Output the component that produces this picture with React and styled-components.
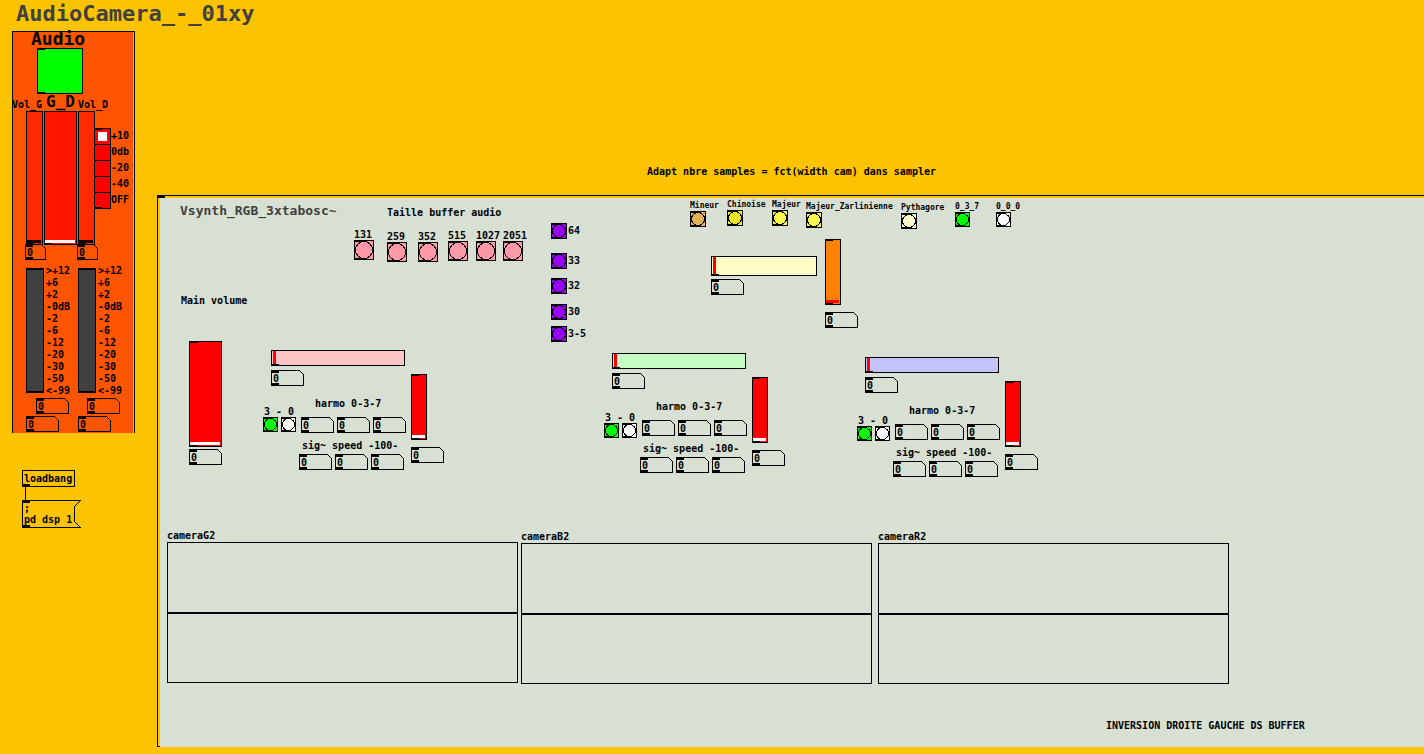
import React from "react";
import styled, { createGlobalStyle, css } from "styled-components";

const INK = "#000000";
const YELLOW = "#fcc400";
const GREY = "#d8e0d4";
const ORANGE = "#ff5500";
const SLATE = "#404040";

const GlobalStyle = createGlobalStyle`
  *, *::before, *::after { box-sizing: border-box; }
  body {
    margin: 0;
    background: ${YELLOW};
    color: ${INK};
    font: bold 10px/11px "DejaVu Sans Mono", monospace;
    white-space: nowrap;
  }
  button, input { font: inherit; color: inherit; margin: 0; padding: 0; border-radius: 0; }
`;

/* ---------- page ---------- */

const Page = styled.div`
  min-height: 100vh;
  overflow-x: hidden;
`;

const Header = styled.header`
  height: 31px;
  padding: 1px 16px 0;
`;

const Title = styled.h1`
  margin: 0;
  color: ${SLATE};
  font-size: 22px;
  line-height: 25px;
`;

const Body = styled.main`
  display: flex;
  align-items: flex-start;
`;

const Side = styled.aside`
  flex: 0 0 157px;
  padding-left: 12px;
`;

const Main = styled.section`
  flex: 1;
  min-width: 0;
`;

const Note = styled.p`
  display: flex;
  align-items: flex-end;
  height: 164px;
  margin: 0;
  padding: 0 0 18px 490px;
`;

/* ---------- shared parts ---------- */

const outlet = css`
  content: "";
  position: absolute;
  left: -1px;
  width: 8px;
  height: 2px;
  background: ${INK};
  pointer-events: none;
`;

const iolets = css`
  position: relative;
  &::before { ${outlet} top: -1px; }
  &::after { ${outlet} bottom: -1px; }
`;

const Row = styled.div`
  display: flex;
  align-items: flex-start;
  gap: ${(p) => p.$gap || 0}px;
  margin-top: ${(p) => p.$top || 0}px;
  padding-left: ${(p) => p.$indent || 0}px;
`;

const Column = styled.div`
  display: flex;
  flex: none;
  flex-direction: column;
  align-items: flex-start;
  gap: ${(p) => p.$gap || 0}px;
  padding-top: ${(p) => p.$top || 0}px;
`;

const BangButton = styled.button`
  flex: none;
  width: ${(p) => p.$size}px;
  height: ${(p) => p.$size}px;
  border: 1px solid ${INK};
  background: ${(p) => p.$color};
  ${iolets}
`;

const BangFace = styled.svg`
  display: block;
  width: 100%;
  height: 100%;
`;

function Bang({ size = 16, color, label }) {
  const d = size - 2;
  return (
    <BangButton type="button" aria-label={label} $size={size} $color={color}>
      <BangFace viewBox={`0 0 ${d} ${d}`} shapeRendering="crispEdges">
        <circle cx={d / 2} cy={d / 2} r={d / 2 - 0.5} fill="none" stroke={INK} strokeWidth="1" />
      </BangFace>
    </BangButton>
  );
}

const NumberFrame = styled.div`
  position: relative;
  flex: none;
  width: ${(p) => p.$w}px;
  height: 16px;
`;

const Outline = styled.svg`
  position: absolute;
  inset: 0;
  pointer-events: none;
`;

const NumberInput = styled.input`
  display: block;
  width: 100%;
  height: 16px;
  padding: 0 4px 0 2px;
  border: 0;
  background: transparent;
  outline: 0;
`;

function NumberBox({ w = 33, label }) {
  return (
    <NumberFrame $w={w}>
      <Outline width={w} height="16" shapeRendering="crispEdges">
        <path d={`M.5 .5H${w - 4.5}L${w - 0.5} 4.5V15.5H.5Z`} fill="none" stroke={INK} />
        <path d="M0 0H8V3H0ZM0 13H8V16H0Z" fill={INK} />
      </Outline>
      <NumberInput type="text" inputMode="numeric" defaultValue="0" aria-label={label} />
    </NumberFrame>
  );
}

const SliderFrame = styled.div`
  display: flex;
  flex: none;
  width: ${(p) => p.$w}px;
  height: ${(p) => p.$h}px;
  padding: ${(p) => (p.$vertical ? "0 1px 1px 0" : "0 1px")};
  border: 1px solid ${INK};
  background: ${(p) => p.$color};
  ${iolets}
  ${(p) => !p.$inlet && "&::before { display: none; }"}
`;

const Range = styled.input`
  appearance: none;
  display: block;
  width: 100%;
  height: 100%;
  min-width: 0;
  background: transparent;
  ${(p) => p.$vertical && "writing-mode: vertical-lr; direction: rtl;"}

  &::-webkit-slider-runnable-track {
    width: 100%;
    height: 100%;
  }
  &::-webkit-slider-thumb {
    appearance: none;
    width: ${(p) => (p.$vertical ? "100%" : "3px")};
    height: ${(p) => (p.$vertical ? "3px" : "100%")};
    background: ${(p) => p.$knob};
  }
`;

function Slider({ w, h, color, knob = "#ffffff", vertical, inlet = vertical, label }) {
  return (
    <SliderFrame $w={w} $h={h} $color={color} $vertical={vertical} $inlet={inlet}>
      <Range type="range" defaultValue="0" aria-label={label} $knob={knob} $vertical={vertical} />
    </SliderFrame>
  );
}

/* ---------- audio panel ---------- */

const AudioPanel = styled.section`
  width: 123px;
  padding-right: 1px;
  border: solid ${INK};
  border-width: 1px 1px 0 1px;
`;

const AudioBody = styled.div`
  display: flow-root;
  padding-bottom: 1px;
  background: ${ORANGE};
`;

const PowerName = styled.label`
  display: block;
  height: 20px;
  margin: -4px 0 0 18px;
  font-size: 18px;
  line-height: 22px;
`;

const Power = styled.input`
  appearance: none;
  display: block;
  width: 46px;
  height: 46px;
  margin-left: 24px;
  border: 1px solid ${INK};
  background: #00ff00;
  ${iolets}
`;

const FaderNames = styled.div`
  display: grid;
  grid-template-columns: 34px 32px auto;
  height: 17px;
  margin-left: -1px;
`;

const FaderName = styled.span`
  font-size: ${(p) => (p.$big ? 16 : 10)}px;
  line-height: ${(p) => (p.$big ? 15 : 21)}px;
`;

const GainList = styled.div`
  position: relative;
  height: 81px;
  margin: 17px 0 0 -2px;
  &::before { ${outlet} left: 0; top: 0; }
  &::after { ${outlet} left: 0; bottom: 0; }
`;

const GainOption = styled.label`
  display: flex;
  height: 16px;
  line-height: 15px;
`;

const GainRadio = styled.input`
  appearance: none;
  flex: none;
  width: 17px;
  height: 17px;
  border: 1px solid ${INK};
  background: #ff0000;
  &:checked { box-shadow: inset 0 0 0 3px #ff0000; background: #ffffff; }
`;

const Meters = styled.div`
  display: grid;
  grid-template-columns: 52px 52px;
  margin-top: 5px;
  padding-left: 13px;
`;

const MeterGroup = styled.div`
  display: flex;
  gap: 2px;
`;

const Meter = styled.div`
  width: 18px;
  height: 125px;
  margin-top: 3px;
  border: solid ${INK};
  border-width: 2px 1px;
  background: ${SLATE};
`;

const Scale = styled.ul`
  margin: 0;
  padding: 0;
  list-style: none;
  line-height: 12px;
`;

const LEVELS = [">+12", "+6", "+2", "-0dB", "-2", "-6", "-12", "-20", "-30", "-50", "<-99"];
const GAINS = ["+10", "0db", "-20", "-40", "OFF"];
const CHANNELS = ["G", "D"];

function Audio() {
  return (
    <AudioPanel>
      <AudioBody>
        <PowerName htmlFor="power">Audio</PowerName>
        <Power id="power" type="checkbox" />
        <FaderNames>
          <FaderName>Vol_G</FaderName>
          <FaderName $big>G_D</FaderName>
          <FaderName>Vol_D</FaderName>
        </FaderNames>
        <Row $indent={13} $gap={1}>
          <Slider w={17} h={134} color="#ff2a00" knob={INK} vertical inlet={false} label="Vol_G" />
          <Slider w={33} h={134} color="#ff1500" vertical inlet={false} label="G_D" />
          <Slider w={17} h={134} color="#ff2a00" knob={INK} vertical inlet={false} label="Vol_D" />
          <GainList role="radiogroup" aria-label="Gain">
            {GAINS.map((gain) => (
              <GainOption key={gain}>
                <GainRadio type="radio" name="gain" defaultChecked={gain === "+10"} />
                {gain}
              </GainOption>
            ))}
          </GainList>
        </Row>
        <Row $indent={12} $gap={31} $top={-1}>
          {CHANNELS.map((c) => <NumberBox key={c} w={21} label={`Vol_${c} value`} />)}
        </Row>
        <Meters>
          {CHANNELS.map((c) => (
            <MeterGroup key={c}>
              <Meter role="img" aria-label={`Level ${c}`} />
              <Scale>
                {LEVELS.map((level) => <li key={level}>{level}</li>)}
              </Scale>
            </MeterGroup>
          ))}
        </Meters>
        <Row $indent={23} $gap={18} $top={1}>
          {CHANNELS.map((c) => <NumberBox key={c} label={`Peak ${c}`} />)}
        </Row>
        <Row $indent={13} $gap={19} $top={2}>
          {CHANNELS.map((c) => <NumberBox key={c} label={`RMS ${c}`} />)}
        </Row>
      </AudioBody>
    </AudioPanel>
  );
}

/* ---------- start-up objects ---------- */

const Startup = styled.div`
  display: flex;
  flex-direction: column;
  align-items: flex-start;
  margin: 37px 0 0 10px;
`;

const ObjectBox = styled.div`
  position: relative;
  width: 53px;
  height: 17px;
  padding: 2px 1px;
  border: 1px solid ${INK};
  &::after { ${outlet} bottom: -1px; height: 3px; }
`;

const Cord = styled.div`
  width: 1px;
  height: 13px;
  margin-left: 3px;
  background: ${INK};
`;

const Message = styled.button`
  position: relative;
  width: 59px;
  height: 28px;
  padding: 0 0 0 2px;
  border: 0;
  background: transparent;
  line-height: 11px;
  text-align: left;
  white-space: pre;
`;

/* ---------- synth panel ---------- */

const SynthPanel = styled.section`
  position: relative;
  padding: 2px 0 0 2px;
  border: solid ${INK};
  border-width: 1px 0 0 1px;
  &::before { ${outlet} top: -1px; height: 3px; }
  &::after { ${outlet} bottom: 0; width: 3px; height: 1px; }
`;

const SynthBody = styled.div`
  display: flow-root;
  margin-bottom: -1px;
  padding-bottom: 16px;
  background: ${GREY};
`;

const Output = styled.section`
  flex: 0 0 92px;
  min-width: 0;
  padding: 5px 0 0 20px;
`;

const SynthTitle = styled.h2`
  margin: 0 0 77px;
  color: ${SLATE};
  font-size: 13px;
  line-height: 15px;
`;

const OutputLevel = styled.div`
  display: grid;
  gap: 2px;
  margin: 35px 0 0 9px;
`;

const OutputName = styled.div`
  padding-left: 1px;
`;

const Controls = styled.div`
  display: flex;
  align-items: flex-start;
  padding: 0 0 8px 102px;
`;

const Buffers = styled.section`
  flex: 0 0 197px;
  padding-top: 9px;
`;

const BufferTitle = styled.div`
  padding: 0 0 11px 33px;
`;

const BufferGrid = styled.div`
  display: grid;
  grid-template-columns: 33px 31px 30px 28px 27px 24px;
`;

const Steps = styled.section`
  flex: 0 0 139px;
  padding-top: 11px;
`;

const Step = styled.div`
  display: flex;
  gap: 1px;
  margin-top: ${(p) => p.$gap}px;
  line-height: 15px;
`;

const ModeGrid = styled.div`
  display: grid;
  grid-template-columns: 37px 45px 34px 95px 54px 41px 25px;
`;

const ModeName = styled.span`
  font-size: 8px;
  line-height: 10px;
`;

const Voices = styled.div`
  display: flex;
  align-items: flex-start;
  padding-left: 11px;
`;

const VoiceGroup = styled.section`
  display: flex;
  flex: none;
  align-items: flex-start;
  margin: ${(p) => p.$drop}px 0 0 ${(p) => p.$gap}px;
`;

const VoiceControls = styled.div`
  width: 148px;
`;

const Pitch = styled.div`
  display: grid;
  gap: 4px;
  padding-left: 8px;
`;

const Switches = styled.div`
  flex: 0 0 38px;
  padding-top: ${(p) => p.$top}px;
`;

const VoiceText = styled.div`
  padding: 0 0 ${(p) => p.$below}px ${(p) => p.$indent}px;
`;

const SpeedBlock = styled.div`
  margin: 7px 0 0 -2px;
`;

const Scopes = styled.section`
  display: flex;
  align-items: flex-start;
  margin-top: 53px;
  padding-left: 7px;
`;

const Scope = styled.figure`
  flex: 0 0 351px;
  margin: ${(p) => p.$drop}px 0 0 ${(p) => p.$gap}px;
`;

const ScopeName = styled.figcaption`
  height: 12px;
`;

const Trace = styled.div`
  height: ${(p) => p.$h}px;
  border: 1px solid ${INK};
`;

const Remark = styled.p`
  margin: 36px 0 0;
  padding-left: 946px;
`;

const BUFFERS = [
  { text: "131", drop: 0 },
  { text: "259", drop: 2 },
  { text: "352", drop: 2 },
  { text: "515", drop: 1 },
  { text: "1027", drop: 1 },
  { text: "2051", drop: 1 },
];

const STEPS = [
  { text: "64", gap: 14 },
  { text: "33", gap: 14 },
  { text: "32", gap: 9 },
  { text: "30", gap: 10 },
  { text: "3-5", gap: 6 },
];

const MODES = [
  { text: "Mineur", drop: 1, color: "#e4b054" },
  { text: "Chinoise", drop: 0, color: "#e8e828" },
  { text: "Majeur", drop: 0, color: "#f8f850" },
  { text: "Majeur_Zarlinienne", drop: 2, color: "#f8f850" },
  { text: "Pythagore", drop: 3, color: "#fcfcc8" },
  { text: "0_3_7", drop: 2, color: "#00fc00", size: 15 },
  { text: "0_0_0", drop: 2, color: "#fcfcfc", size: 15 },
];

const VOICES = [
  { name: "G", gap: 0, drop: 0, switchTop: 8, color: "#fcc4c4" },
  { name: "B", gap: 160, drop: 3, switchTop: 8, color: "#c4fcc4" },
  { name: "R", gap: 72, drop: 7, switchTop: 10, color: "#c4c4fc" },
].map((v) => (v.name === "B" ? { ...v, switchTop: 11 } : v));

const SCOPES = [
  { name: "cameraG2", gap: 0, drop: 0 },
  { name: "cameraB2", gap: 3, drop: 1 },
  { name: "cameraR2", gap: 6, drop: 1 },
];

function NumberTrio({ label }) {
  return (
    <Row $gap={3}>
      {[1, 2, 3].map((n) => <NumberBox key={n} label={`${label} ${n}`} />)}
    </Row>
  );
}

function Voice({ name, gap, drop, switchTop, color }) {
  return (
    <VoiceGroup $gap={gap} $drop={drop} aria-label={`Voice ${name}`}>
      <VoiceControls>
        <Pitch>
          <Slider w={134} h={16} color={color} knob="#ff0000" label="Pitch" />
          <NumberBox label="Pitch value" />
        </Pitch>
        <Row $top={12}>
          <Switches $top={switchTop}>
            <VoiceText $indent={1} $below={0}>3 - 0</VoiceText>
            <Row $gap={3}>
              <Bang size={15} color="#00ff00" label="3" />
              <Bang size={15} color="#fcfcfc" label="0" />
            </Row>
          </Switches>
          <div>
            <VoiceText $indent={14} $below={8}>harmo 0-3-7</VoiceText>
            <NumberTrio label="harmo" />
            <SpeedBlock>
              <VoiceText $indent={3} $below={3}>sig~ speed -100-</VoiceText>
              <NumberTrio label="speed" />
            </SpeedBlock>
          </div>
        </Row>
      </VoiceControls>
      <Column $gap={7} $top={24}>
        <Slider w={16} h={66} color="#ff0000" vertical label="Volume" />
        <NumberBox label="Volume value" />
      </Column>
    </VoiceGroup>
  );
}

function Synth() {
  return (
    <SynthPanel>
      <SynthBody>
        <Row>
          <Output>
            <SynthTitle>Vsynth_RGB_3xtabosc~</SynthTitle>
            <OutputName>Main volume</OutputName>
            <OutputLevel>
              <Slider w={33} h={106} color="#ff0000" vertical label="Main volume" />
              <NumberBox label="Main volume value" />
            </OutputLevel>
          </Output>
          <div>
            <Controls>
              <Buffers>
                <BufferTitle>Taille buffer audio</BufferTitle>
                <BufferGrid>
                  {BUFFERS.map((b) => (
                    <Column key={b.text} $top={b.drop}>
                      <span>{b.text}</span>
                      <Bang size={20} color="#fc98a8" label={b.text} />
                    </Column>
                  ))}
                </BufferGrid>
              </Buffers>
              <Steps>
                {STEPS.map((s) => (
                  <Step key={s.text} $gap={s.gap}>
                    <Bang color="#9800fc" label={s.text} />
                    <span>{s.text}</span>
                  </Step>
                ))}
              </Steps>
              <Column $gap={10} $top={2}>
                <ModeGrid>
                  {MODES.map((m) => (
                    <Column key={m.text} $top={m.drop}>
                      <ModeName>{m.text}</ModeName>
                      <Bang size={m.size} color={m.color} label={m.text} />
                    </Column>
                  ))}
                </ModeGrid>
                <Row $indent={21} $gap={8}>
                  <Column $gap={3} $top={17}>
                    <Slider w={106} h={20} color="#fcfcc4" knob="#ff0000" label="Base pitch" />
                    <NumberBox label="Base pitch value" />
                  </Column>
                  <Column $gap={7}>
                    <Slider w={16} h={66} color="#ff8000" knob="#ff0000" vertical label="Ratio" />
                    <NumberBox label="Ratio value" />
                  </Column>
                </Row>
              </Column>
            </Controls>
            <Voices>
              {VOICES.map((v) => <Voice key={v.name} {...v} />)}
            </Voices>
          </div>
        </Row>
        <Scopes>
          {SCOPES.map((s) => (
            <Scope key={s.name} $gap={s.gap} $drop={s.drop}>
              <ScopeName>{s.name}</ScopeName>
              <Trace $h={71} />
              <Trace $h={70} />
            </Scope>
          ))}
        </Scopes>
        <Remark>INVERSION DROITE GAUCHE DS BUFFER</Remark>
      </SynthBody>
    </SynthPanel>
  );
}

export default function App() {
  return (
    <Page>
      <GlobalStyle />
      <Header>
        <Title>AudioCamera_-_01xy</Title>
      </Header>
      <Body>
        <Side>
          <Audio />
          <Startup>
            <ObjectBox>loadbang</ObjectBox>
            <Cord />
            <Message type="button">
              <Outline width="59" height="28" shapeRendering="crispEdges">
                <path d="M58.5 .5H.5V27.5H58.5L52.5 21.5V6.5Z" fill="none" stroke={INK} />
                <path d="M0 0H8V3H0ZM0 25H8V28H0Z" fill={INK} />
              </Outline>
              {";\npd dsp 1"}
            </Message>
          </Startup>
        </Side>
        <Main>
          <Note>Adapt nbre samples = fct(width cam) dans sampler</Note>
          <Synth />
        </Main>
      </Body>
    </Page>
  );
}
